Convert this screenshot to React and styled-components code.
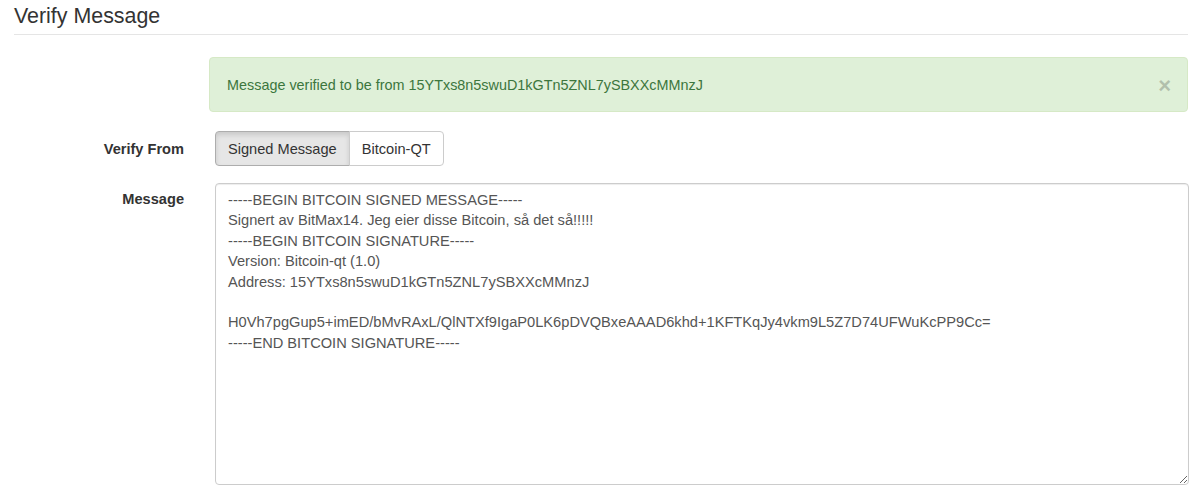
import React from "react";
import styled, { createGlobalStyle } from "styled-components";

const GlobalStyle = createGlobalStyle`
  body {
    margin: 0;
    background: #fff;
    font-family: "Liberation Sans", Arial, Helvetica, sans-serif;
    color: #333;
  }
`;

const Page = styled.div`
  padding: 0 12px 0 14px;
`;

const Title = styled.h3`
  margin: 5px 0 0;
  padding-bottom: 6px;
  font-size: 21.4px;
  font-weight: 400;
  line-height: 23px;
  color: #333;
  border-bottom: 1px solid #e5e5e5;
`;

const Alert = styled.div`
  margin: 22px 0 0 195px;
  padding: 15px 12px 15px 17px;
  display: flex;
  align-items: center;
  justify-content: space-between;
  background: #dff0d8;
  border: 1px solid #d6e9c6;
  border-radius: 4px;
  color: #3c763d;
  font-size: 14.4px;
  line-height: 20px;
`;

const Close = styled.button`
  padding: 0;
  margin: 3px 4px 0 0;
  height: 20px;
  border: 0;
  background: transparent;
  font-family: inherit;
  font-size: 22px;
  font-weight: 700;
  line-height: 20px;
  color: #000;
  opacity: 0.2;
  cursor: pointer;
`;

const Form = styled.div`
  margin-top: 19px;
  display: grid;
  grid-template-columns: 170px 1fr;
  column-gap: 31px;
  row-gap: 17px;
`;

const Label = styled.label`
  padding-top: ${(p) => p.$top || 8}px;
  text-align: right;
  font-size: 14.6px;
  font-weight: 700;
  line-height: 20.4px;
  color: #333;
`;

const Group = styled.div`
  display: flex;
`;

const Toggle = styled.button`
  height: 35px;
  padding: 0 12px;
  font-family: inherit;
  font-size: 14.6px;
  color: #333;
  background: ${(p) => (p.$active ? "#e6e6e6" : "#fff")};
  border: 1px solid ${(p) => (p.$active ? "#adadad" : "#ccc")};
  box-shadow: ${(p) => (p.$active ? "inset 0 3px 5px rgba(0,0,0,.125)" : "none")};
  border-radius: 0;
  &:first-child {
    border-radius: 4px 0 0 4px;
  }
  &:last-child {
    border-radius: 0 4px 4px 0;
    margin-left: -1px;
  }
`;

const Area = styled.textarea`
  display: block;
  box-sizing: border-box;
  width: 974px;
  height: 302px;
  padding: 6px 12px;
  font-family: inherit;
  font-size: 14.65px;
  line-height: 20.4px;
  color: #555;
  border: 1px solid #ccc;
  border-radius: 4px;
  box-shadow: inset 0 1px 1px rgba(0,0,0,.075);
  outline: none;
  resize: vertical;
`;

const message = `-----BEGIN BITCOIN SIGNED MESSAGE-----
Signert av BitMax14. Jeg eier disse Bitcoin, så det så!!!!!
-----BEGIN BITCOIN SIGNATURE-----
Version: Bitcoin-qt (1.0)
Address: 15YTxs8n5swuD1kGTn5ZNL7ySBXXcMMnzJ

H0Vh7pgGup5+imED/bMvRAxL/QlNTXf9IgaP0LK6pDVQBxeAAAD6khd+1KFTKqJy4vkm9L5Z7D74UFWuKcPP9Cc=
-----END BITCOIN SIGNATURE-----`;

const App = () => {
  return (
    <Page>
      <GlobalStyle />
      <Title>Verify Message</Title>
      <Alert>
        <span>Message verified to be from 15YTxs8n5swuD1kGTn5ZNL7ySBXXcMMnzJ</span>
        <Close aria-label="Close">×</Close>
      </Alert>
      <Form>
        <Label>Verify From</Label>
        <Group>
          <Toggle $active>Signed Message</Toggle>
          <Toggle>Bitcoin-QT</Toggle>
        </Group>
        <Label $top={6}>Message</Label>
        <div>
          <Area defaultValue={message} spellCheck={false} />
        </div>
      </Form>
    </Page>
  );
};

export default App;
